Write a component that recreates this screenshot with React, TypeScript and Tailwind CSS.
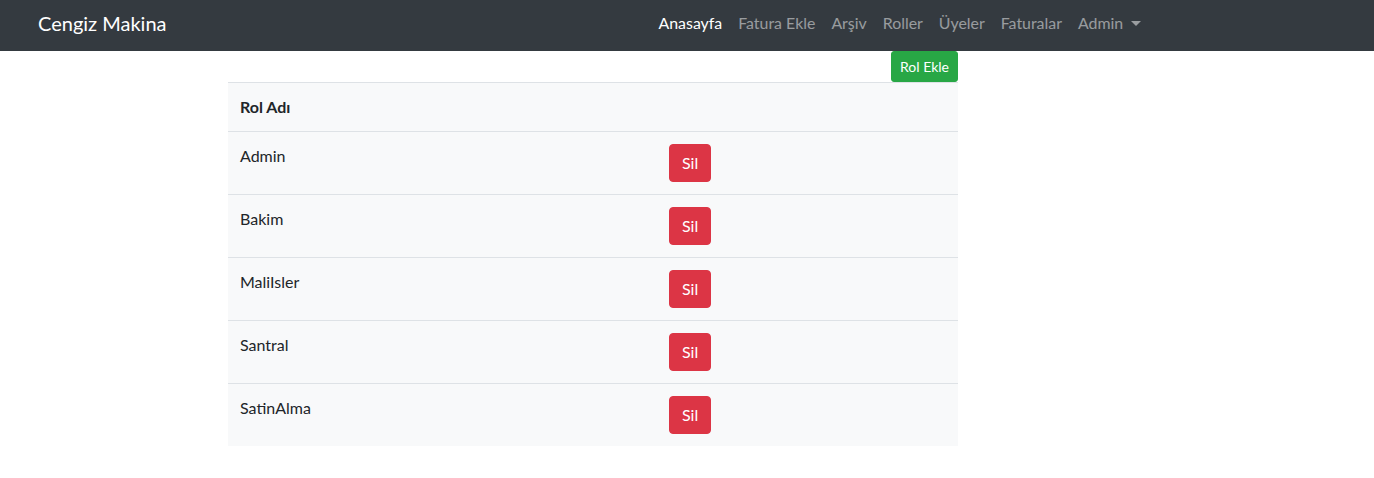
const roles = ['Admin', 'Bakim', 'MaliIsler', 'Santral', 'SatinAlma'];

const links = ['Anasayfa', 'Fatura Ekle', 'Arşiv', 'Roller', 'Üyeler', 'Faturalar'];

export default function App() {
  return (
    <div className="min-h-screen bg-white text-[#212529] font-['Lato','Open_Sans',sans-serif] text-base">
      <nav className="h-[51px] bg-[#343a40] flex items-center pl-[38px] pb-[5px]">
        <a className="text-[20px] text-white leading-[30px]">Cengiz Makina</a>
        <ul className="flex items-center ml-[484px] text-[15.9px]">
          {links.map((l, i) => (
            <li key={l}>
              <a className={`px-2 leading-6 ${i === 0 ? 'text-white' : 'text-white/50'}`}>{l}</a>
            </li>
          ))}
          <li>
            <a className="px-2 leading-6 text-white/50 flex items-center">
              Admin
              <span className="ml-[8px] inline-block w-0 h-0 border-x-[5px] border-x-transparent border-t-[5px] border-t-white/50" />
            </a>
          </li>
        </ul>
      </nav>

      <main className="ml-[228px] w-[730px]">
        <div className="flex justify-end">
          <button className="h-[31px] px-2 text-sm text-white bg-[#28a745] border border-[#28a745] rounded-[3px]">
            Rol Ekle
          </button>
        </div>
        <table className="w-full border-collapse bg-[#f8f9fa] table-fixed">
          <thead>
            <tr>
              <th className="w-[429px] text-left font-bold p-3 leading-6 border-t border-[#dee2e6]">Rol Adı</th>
              <th className="p-3 border-t border-[#dee2e6]"></th>
            </tr>
          </thead>
          <tbody>
            {roles.map((r) => (
              <tr key={r}>
                <td className="p-3 leading-6 align-top border-t border-[#dee2e6]">{r}</td>
                <td className="p-3 align-top border-t border-[#dee2e6]">
                  <button className="h-[38px] px-3 leading-6 text-white bg-[#dc3545] border border-[#dc3545] rounded">
                    Sil
                  </button>
                </td>
              </tr>
            ))}
          </tbody>
        </table>
      </main>
    </div>
  );
}
